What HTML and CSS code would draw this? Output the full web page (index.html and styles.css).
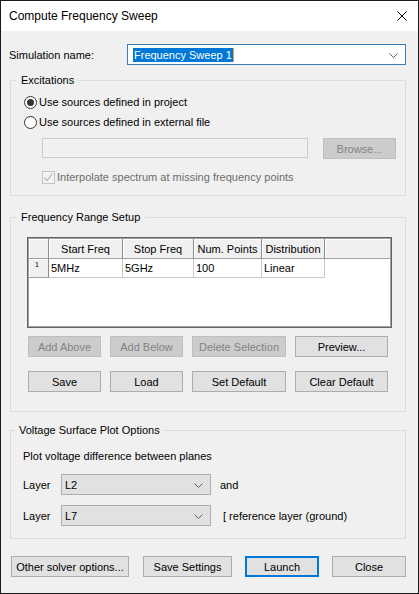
FILE: index.html
```html
<!DOCTYPE html>
<html>
<head>
<meta charset="utf-8">
<link rel="stylesheet" href="styles.css">
</head>
<body>
<div class="window">
  <div class="titlebar">
    <span class="title">Compute Frequency Sweep</span>
    <svg class="close" width="10" height="10" viewBox="0 0 10 10"><path d="M0.5 0.5 L9.5 9.5 M9.5 0.5 L0.5 9.5" stroke="#000" stroke-width="1" fill="none"/></svg>
  </div>
  <div class="body">
    <div class="name-row">
      <span class="name-label">Simulation name:</span>
      <div class="combo focused">
        <span class="sel">Frequency Sweep 1</span><span class="caret"></span>
        <svg class="chev" width="9" height="5" viewBox="0 0 9 5"><path d="M0.5 0.5 L4.5 4.5 L8.5 0.5" stroke="#606060" fill="none"/></svg>
      </div>
    </div>

    <fieldset class="group g1">
      <legend>Excitations</legend>
      <div class="g1-inner">
        <div class="opt-row"><span class="radio checked"></span><span>Use sources defined in project</span></div>
        <div class="opt-row"><span class="radio"></span><span>Use sources defined in external file</span></div>
        <div class="file-row">
          <div class="textbox"></div>
          <div class="btn disabled browse">Browse...</div>
        </div>
        <div class="opt-row check-row">
          <span class="checkbox"><svg width="11" height="11" viewBox="0 0 11 11"><path d="M1.5 5.5 L4 8.5 L9.5 1.5" stroke="#b4b4b4" stroke-width="1.2" fill="none"/></svg></span>
          <span class="dim">Interpolate spectrum at missing frequency points</span>
        </div>
      </div>
    </fieldset>

    <fieldset class="group g2">
      <legend>Frequency Range Setup</legend>
      <div class="g2-inner">
        <div class="grid">
          <div class="grid-row head">
            <div class="hc corner"></div>
            <div class="hc">Start Freq</div>
            <div class="hc">Stop Freq</div>
            <div class="hc">Num. Points</div>
            <div class="hc">Distribution</div>
            <div class="hc last"></div>
          </div>
          <div class="grid-row data">
            <div class="rh">1</div>
            <div class="dc">5MHz</div>
            <div class="dc">5GHz</div>
            <div class="dc">100</div>
            <div class="dc">Linear</div>
            <div class="empty"></div>
          </div>
        </div>
        <div class="btn-grid">
          <div class="btn disabled">Add Above</div>
          <div class="btn disabled">Add Below</div>
          <div class="btn disabled">Delete Selection</div>
          <div class="btn">Preview...</div>
        </div>
        <div class="btn-grid second">
          <div class="btn">Save</div>
          <div class="btn">Load</div>
          <div class="btn">Set Default</div>
          <div class="btn">Clear Default</div>
        </div>
      </div>
    </fieldset>

    <fieldset class="group g3">
      <legend>Voltage Surface Plot Options</legend>
      <div class="g3-inner">
        <div class="plot-text">Plot voltage difference between planes</div>
        <div class="layer-row">
          <span class="layer-label">Layer</span>
          <div class="combo plain"><span>L2</span>
            <svg class="chev" width="9" height="5" viewBox="0 0 9 5"><path d="M0.5 0.5 L4.5 4.5 L8.5 0.5" stroke="#606060" fill="none"/></svg>
          </div>
          <span class="after">and</span>
        </div>
        <div class="layer-row second">
          <span class="layer-label">Layer</span>
          <div class="combo plain"><span>L7</span>
            <svg class="chev" width="9" height="5" viewBox="0 0 9 5"><path d="M0.5 0.5 L4.5 4.5 L8.5 0.5" stroke="#606060" fill="none"/></svg>
          </div>
          <span class="after ref">[ reference layer (ground)</span>
        </div>
      </div>
    </fieldset>

    <div class="footer">
      <div class="btn other">Other solver options...</div>
      <div class="btn save-set">Save Settings</div>
      <div class="btn launch">Launch</div>
      <div class="btn close-btn">Close</div>
    </div>
  </div>
</div>
</body>
</html>
```
FILE: styles.css
```css
html, body {
  margin: 0;
  padding: 0;
  background: #ffffff;
}

body {
  font-family: "Liberation Sans", Arial, sans-serif;
  font-size: 11px;
  color: #000;
}

.window {
  width: 419px;
  height: 594px;
  box-sizing: border-box;
  border: 1px solid #1a1a1a;
  background: #f0f0f0;
  display: flex;
  flex-direction: column;
}

.titlebar {
  height: 30px;
  background: #ffffff;
  display: flex;
  align-items: center;
  justify-content: space-between;
  padding: 0 11px 0 8px;
  flex: 0 0 auto;
}

.title {
  font-size: 12px;
  color: #000;
}

.close {
  display: block;
}

.body {
  padding: 13px 12px 0 9px;
  display: flex;
  flex-direction: column;
}

.name-row {
  display: flex;
  align-items: center;
  height: 21px;
}

.name-label {
  flex: 0 0 117px;
  margin-left: -1px;
  padding-right: 1px;
}

.combo {
  box-sizing: border-box;
  height: 21px;
  display: flex;
  align-items: center;
  position: relative;
}

.combo.focused {
  flex: 1;
  border: 1px solid #3c7bb4;
  background: #fff;
  padding-left: 5px;
}

.sel {
  background: #0078d7;
  color: #fff;
  line-height: 14px;
  padding: 0 1px;
}

.caret {
  display: inline-block;
  width: 1px;
  height: 14px;
  background: #e8a040;
}

.chev {
  position: absolute;
  right: 7px;
  top: 8px;
}

.group {
  margin: 0;
  padding: 0;
  border: 1px solid #dcdcdc;
  min-width: 0;
}

.group legend {
  line-height: 14px;
  padding: 0 5px;
  margin-left: 5px;
}

.g1 {
  margin-top: 8px;
}

.g1-inner {
  padding: 5px 0 8px 13px;
}

.opt-row {
  display: flex;
  align-items: center;
  height: 20px;
}

.radio {
  width: 13px;
  height: 13px;
  box-sizing: border-box;
  border: 1px solid #333;
  border-radius: 50%;
  background: #fff;
  margin-right: 2px;
  display: flex;
  align-items: center;
  justify-content: center;
}

.radio.checked::after {
  content: "";
  width: 7px;
  height: 7px;
  border-radius: 50%;
  background: #333;
}

.file-row {
  display: flex;
  margin-top: 6px;
  margin-left: 18px;
}

.textbox {
  width: 266px;
  height: 20px;
  box-sizing: border-box;
  border: 1px solid #cccccc;
  background: #f0f0f0;
}

.browse {
  width: 73px;
  height: 20px;
  margin-left: 15px;
}

.check-row {
  margin-top: 8px;
  margin-left: 18px;
}

.checkbox {
  width: 13px;
  height: 13px;
  box-sizing: border-box;
  border: 1px solid #c4c4c4;
  background: #f4f4f4;
  margin-right: 2px;
  display: flex;
  align-items: center;
  justify-content: center;
}

.checkbox svg {
  display: block;
}

.dim {
  color: #6d6d6d;
}

.btn {
  box-sizing: border-box;
  height: 21px;
  border: 1px solid #adadad;
  background: #e1e1e1;
  display: flex;
  align-items: center;
  justify-content: center;
  white-space: nowrap;
}

.btn.disabled {
  background: #cccccc;
  border-color: #bfbfbf;
  color: #838383;
}

.g2 {
  margin-top: 14px;
}

.g2-inner {
  padding: 13px 0 19px 16px;
}

.grid {
  width: 365px;
  height: 91px;
  box-sizing: border-box;
  border: 1px solid #646464;
  box-shadow: inset 0 0 0 1px #a0a0a0;
  background: #fff;
  padding: 1px;
}

.grid-row {
  display: grid;
  grid-template-columns: 20px 74px 71px 68px 63px 1fr;
}

.grid-row.head {
  height: 20px;
}

.hc {
  box-sizing: border-box;
  background: #f0f0f0;
  border-right: 1px solid #8c8c8c;
  border-bottom: 1px solid #a0a0a0;
  box-shadow: inset 1px 1px 0 #ffffff;
  display: flex;
  align-items: center;
  justify-content: center;
}

.hc.last {
  border-right: none;
}

.grid-row.data {
  height: 19px;
}

.rh {
  box-sizing: border-box;
  background: #f0f0f0;
  border-right: 1px solid #8c8c8c;
  border-bottom: 1px solid #a0a0a0;
  box-shadow: inset 1px 1px 0 #ffffff;
  font-size: 7px;
  padding: 2px 0 0 6px;
  line-height: 8px;
}

.dc {
  box-sizing: border-box;
  border-right: 1px solid #c8c8c8;
  border-bottom: 1px solid #c8c8c8;
  display: flex;
  align-items: center;
  padding-left: 2px;
}

.btn-grid {
  display: grid;
  grid-template-columns: 73px 73px 94px 93px;
  column-gap: 9px;
  margin-top: 8px;
  margin-left: 1px;
}

.btn-grid.second {
  margin-top: 14px;
}

.g3 {
  margin-top: 11px;
}

.g3 legend {
  margin-left: 4px;
  padding: 0 4px;
}

.g3-inner {
  padding: 12px 0 12px 12px;
}

.plot-text {
  line-height: 14px;
}

.layer-row {
  display: flex;
  align-items: center;
  margin-top: 11px;
  height: 21px;
}

.layer-row.second {
  margin-top: 10px;
}

.layer-label {
  flex: 0 0 38px;
}

.combo.plain {
  width: 150px;
  border: 1px solid #adadad;
  background: #e1e1e1;
  padding-left: 3px;
}

.after {
  margin-left: 9px;
}

.after.ref {
  margin-left: 12px;
}

.footer {
  display: flex;
  margin-top: 17px;
  margin-left: 1px;
}

.other {
  width: 118px;
}

.save-set {
  width: 89px;
  margin-left: 14px;
}

.launch {
  width: 74px;
  margin-left: 13px;
  border: 2px solid #0078d7;
}

.close-btn {
  width: 74px;
  margin-left: 13px;
}
```
